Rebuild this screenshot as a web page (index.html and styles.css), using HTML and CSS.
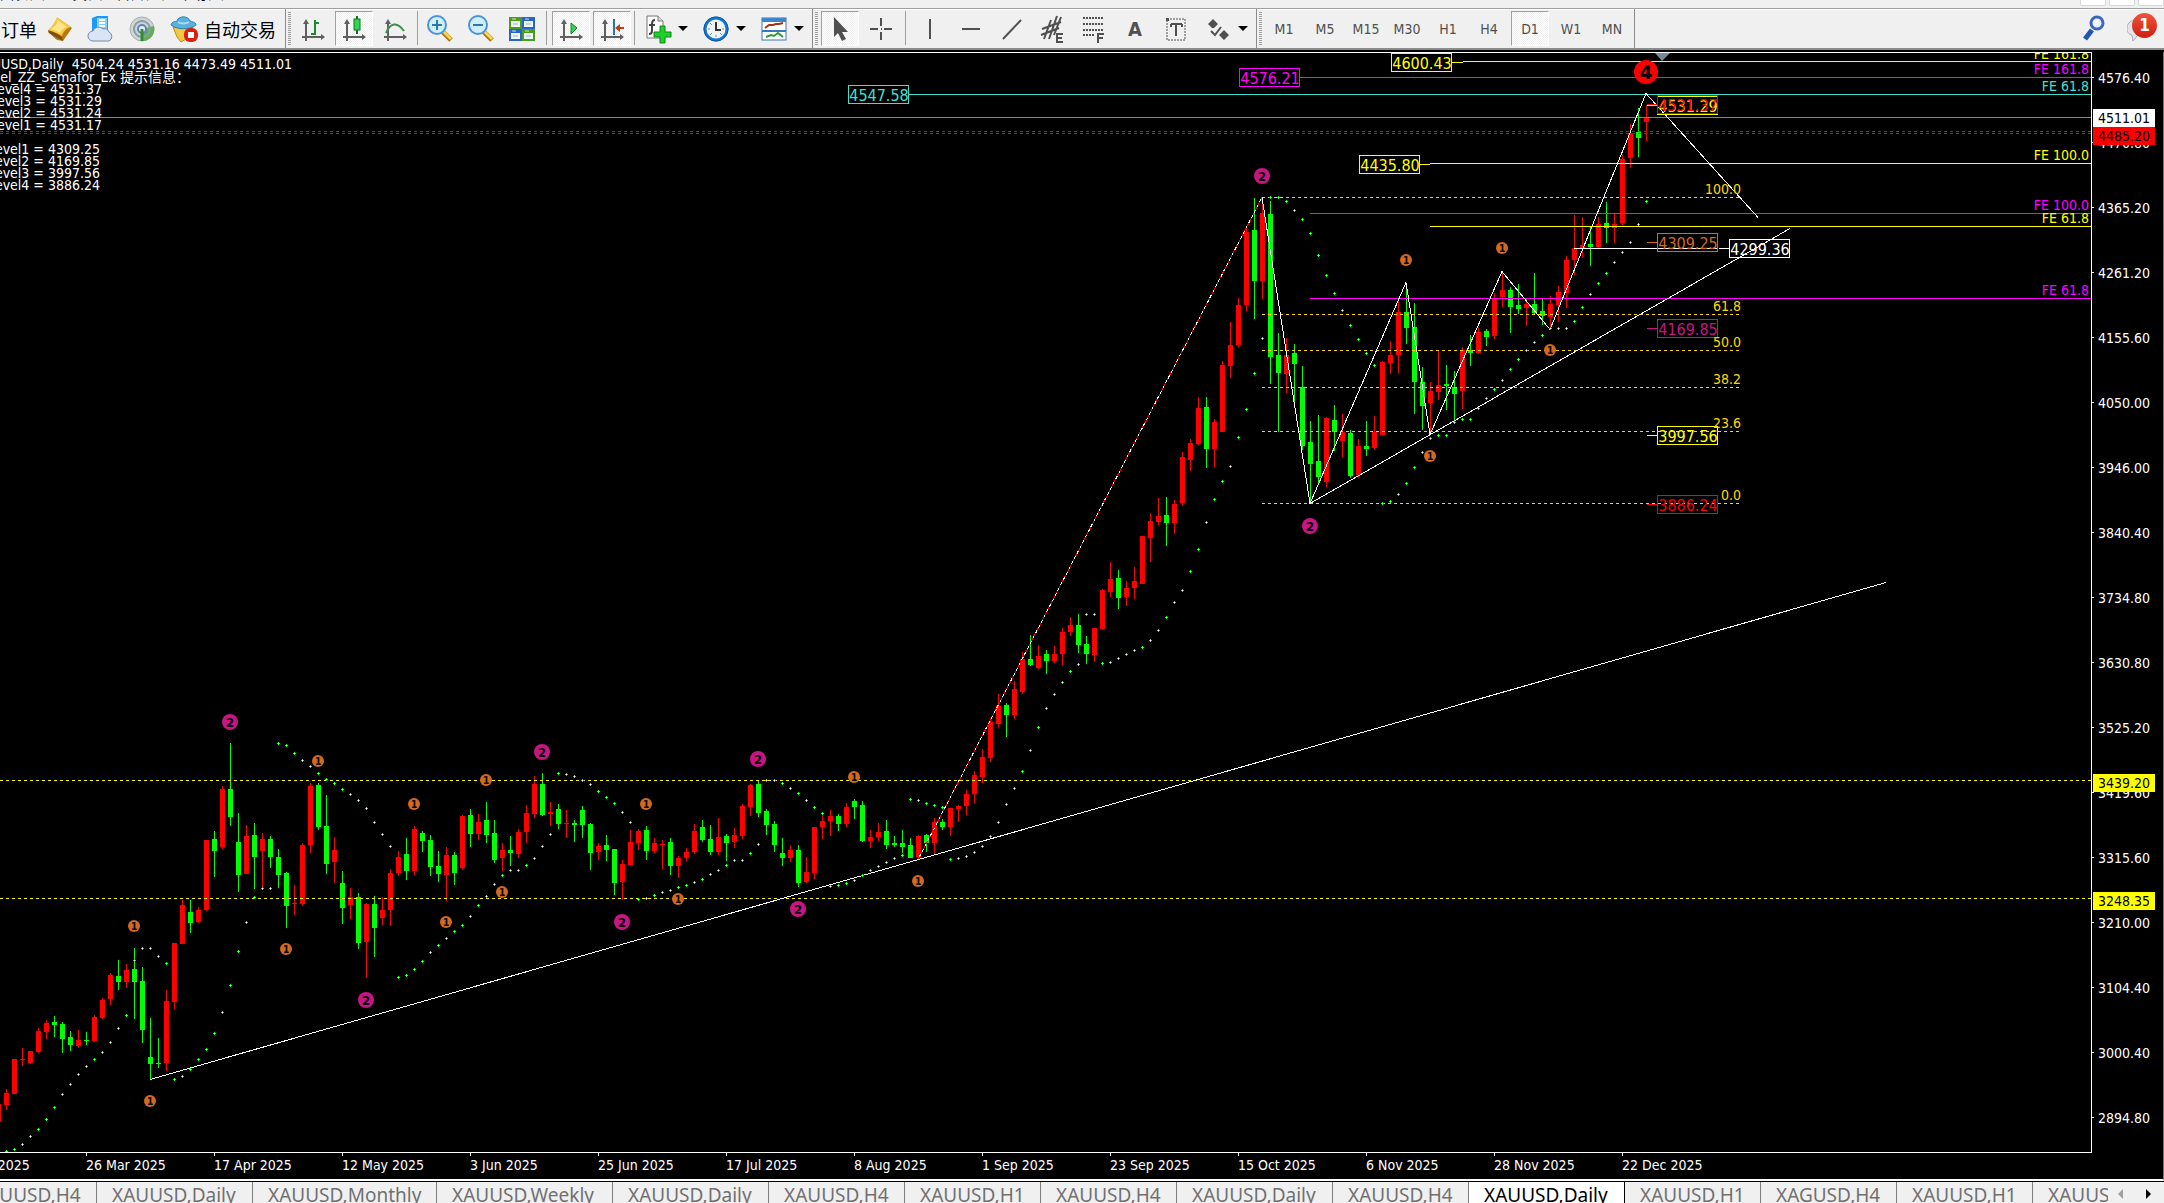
FILE: index.html
```html
<!DOCTYPE html>
<html lang="zh-CN">
<head>
<meta charset="utf-8">
<title>XAUUSD,Daily</title>
<link rel="stylesheet" href="styles.css">
</head>
<body>
<header class="menubar">
  <nav class="menus">
    <button>图表(C)</button><button>工具(T)</button><button>窗口(W)</button><button>帮助(H)</button>
  </nav>
  <div class="window-buttons"><button aria-label="最小化"></button><button aria-label="还原"></button><button aria-label="关闭"></button></div>
</header>

<div class="toolbars">
  <div class="toolbar">
    <button class="tool order">新订单</button>
    <button class="tool" aria-label="市场"><svg width="28" height="28" viewBox="0 0 28 28"><path d="M2 17 12 3l14 10-9 13-6-1z" fill="#b87812"/><path d="M11 2c3 3 8 5 14 10-5 1-8 5-9 9C11 18 6 16 2 15c4-3 7-8 9-13z" fill="#f6c844"/><path d="M12 5c2 3 6 4 9 7-4 1-6 4-7 6-3-2-6-3-9-4 4-2 6-5 7-9z" fill="#fde58a"/><path d="M2 15c4 2 9 3 14 7l1 4L3 18z" fill="#7e4f08"/></svg></button>
    <button class="tool" aria-label="云服务"><svg width="28" height="28" viewBox="0 0 28 28"><path d="M5 3 10 1h11v15l-5 3H5z" fill="#1d9bf0"/><path d="M10 3h10v13H10z" fill="#7fd0ff"/><path d="M12 5h6M12 8h6M12 11h6" stroke="#fff" stroke-width="2"/><path d="M6 26a5 5 0 0 1 0-10 6 6 0 0 1 10-2 5 5 0 0 1 6 3 5 5 0 0 1 0 9z" fill="#dbe4f2" stroke="#7288b2"/></svg></button>
    <button class="tool" aria-label="信号"><svg width="28" height="28" viewBox="0 0 28 28"><circle cx="14" cy="14" r="12" fill="#cdd6d4" stroke="#a3b0b5"/><path d="M14 14 26 11a12 12 0 0 1-12 15z" fill="#5fb054"/><circle cx="14" cy="14" r="8" fill="none" stroke="#8b9ca8" stroke-width="2"/><circle cx="14" cy="14" r="4" fill="#e8edf2" stroke="#5d83b8" stroke-width="2"/><path d="M14 14v12" stroke="#2d8f2d" stroke-width="3"/></svg></button>
    <button class="tool auto"><svg width="28" height="28" viewBox="0 0 28 28"><path d="M3 12h20l-5 11-7 4-4-5z" fill="#f4c83c" stroke="#b98d1c"/><path d="M1 10c1-4 4-3 6-4 1-5 11-6 13 0 2 1 6 1 6 4-6 5-19 5-25 0z" fill="#5bb0dd" stroke="#2f83b4"/><path d="M8 7c3 2 8 2 11 0" stroke="#a8dcf5" stroke-width="2" fill="none"/><rect x="14" y="13" width="14" height="14" rx="6" fill="#d8200f"/><rect x="18" y="17" width="6" height="6" fill="#fff"/></svg><span>自动交易</span></button>
  </div>
  <div class="toolbar">
    <i class="grip"></i>
    <button class="tool" aria-label="柱状图"><svg width="26" height="26" viewBox="0 0 26 26"><g class="axes"><path d="M6 25V5M2 21h20"/><path class="tip" d="M3 8 6 3l3 5zM21 18l4 3-4 3z"/></g><path d="M11 18h4M15 19V4M15 7h4" fill="none" stroke="#1a8a2a" stroke-width="2"/></svg></button>
    <button class="tool on" aria-label="阴阳烛"><svg width="26" height="26" viewBox="0 0 26 26"><g class="axes"><path d="M6 25V5M2 21h20"/><path class="tip" d="M3 8 6 3l3 5zM21 18l4 3-4 3z"/></g><path d="M16 0v18" stroke="#0b7a1c" stroke-width="2"/><rect x="13" y="3" width="6" height="11" fill="#2fd651" stroke="#0b7a1c"/></svg></button>
    <button class="tool" aria-label="折线图"><svg width="26" height="26" viewBox="0 0 26 26"><g class="axes"><path d="M6 25V5M2 21h20"/><path class="tip" d="M3 8 6 3l3 5zM21 18l4 3-4 3z"/></g><path d="M4 17C8 7 15 5 22 15" fill="none" stroke="#3f8f4a" stroke-width="2"/></svg></button>
    <i class="sep"></i>
    <button class="tool" aria-label="放大"><svg width="28" height="28" viewBox="0 0 28 28"><path d="m17 17 8 8" stroke="#a87808" stroke-width="5"/><path d="m17 16 8 8" stroke="#f6d45a" stroke-width="3"/><circle cx="11" cy="10" r="9" fill="#cfeefc" stroke="#4c93d6" stroke-width="2"/><path d="M6 10h10M11 5v10" stroke="#2f78a8" stroke-width="2"/></svg></button>
    <button class="tool" aria-label="缩小"><svg width="28" height="28" viewBox="0 0 28 28"><path d="m17 17 8 8" stroke="#a87808" stroke-width="5"/><path d="m17 16 8 8" stroke="#f6d45a" stroke-width="3"/><circle cx="11" cy="10" r="9" fill="#cfeefc" stroke="#4c93d6" stroke-width="2"/><path d="M6 10h10" stroke="#2f78a8" stroke-width="2"/></svg></button>
    <button class="tool" aria-label="平铺窗口"><svg width="26" height="26" viewBox="0 0 26 26"><path d="M0 1h13v12H0zM13 13h13v12H13z" fill="#4c9c1e"/><path d="M13 1h13v12H13zM0 13h13v12H0z" fill="#2a62d4"/><path d="M2 5h9v6H2zM15 5h9v6h-9zM2 17h9v6H2zM15 17h9v6h-9z" fill="#eef6f4"/><path d="M4 8h5M17 8h5M4 20h5M17 20h5" stroke="#8fb8c8"/><path d="M3 3h4M16 3h4M3 15h4M16 15h4" stroke="#c4e6b8"/></svg></button>
    <i class="sep wide"></i>
    <button class="tool on" aria-label="自动滚动"><svg width="26" height="26" viewBox="0 0 26 26"><g class="axes"><path d="M6 25V5M2 21h20"/><path class="tip" d="M3 8 6 3l3 5zM21 18l4 3-4 3z"/></g><path d="m13 7 6 5-6 6z" fill="#35d055" stroke="#0b8a24"/></svg></button>
    <button class="tool on" aria-label="图表平移"><svg width="26" height="26" viewBox="0 0 26 26"><g class="axes"><path d="M6 25V5M2 21h20"/><path class="tip" d="M3 8 6 3l3 5zM21 18l4 3-4 3z"/></g><path d="M15 3v16" stroke="#2377b8" stroke-width="2"/><path d="m16 12 5-4v3h4v2h-4v3z" fill="#c8380c"/></svg></button>
    <i class="sep"></i>
    <button class="tool menu" aria-label="技术指标"><svg width="30" height="30" viewBox="0 0 30 30"><path d="M4 2h11l5 5v17H4z" fill="#fff" stroke="#777"/><path d="M15 2v5h5" fill="#ddd" stroke="#777"/><path d="M12 6c-3 0-3 2-3 4v7c0 2-1 3-3 3M6 11h6" fill="none" stroke="#444" stroke-width="2"/><path d="M17 12h5v6h6v5h-6v6h-5v-6h-6v-5h6z" fill="#1fcf2c" stroke="#0a8a14"/></svg></button>
    <button class="tool menu" aria-label="时间周期"><svg width="30" height="30" viewBox="0 0 30 30"><circle cx="15" cy="15" r="11" fill="#eef3f6" stroke="#1577cf" stroke-width="3"/><circle cx="15" cy="15" r="12" fill="none" stroke="#0a5aa8"/><path d="M15 8v8h5" fill="none" stroke="#333" stroke-width="2"/><path d="M15 23v-2M7 15h2M23 15h-2M9 9l2 2M9 21l2-2M21 21l-2-2" stroke="#888"/></svg></button>
    <button class="tool menu" aria-label="模板"><svg width="30" height="30" viewBox="0 0 30 30"><rect x="3" y="4" width="24" height="22" fill="#fff" stroke="#3a78b8"/><path d="M3 4h24v4H3z" fill="#3a86d0"/><path d="M3 17h24" stroke="#3a78b8" stroke-width="2"/><path d="m6 14 4-3h4l3-1h3l4-1" fill="none" stroke="#a83014" stroke-width="2"/><path d="m7 23 5-2 3 1 4-3 5 4" fill="none" stroke="#2f9a36" stroke-width="2"/></svg></button>
  </div>
  <div class="toolbar">
    <i class="grip"></i>
    <button class="tool on" aria-label="光标"><svg width="26" height="26" viewBox="0 0 26 26"><path d="M7 1v20l4-4 4 8 4-2-4-7h6z" fill="#505050"/></svg></button>
    <button class="tool" aria-label="十字准线"><svg width="26" height="26" viewBox="0 0 26 26"><path d="M13 2v8M13 16v8M2 13h8M16 13h8M13 13h1" stroke="#505050" stroke-width="2"/></svg></button>
    <i class="sep near"></i>
    <button class="tool" aria-label="垂直线"><svg width="26" height="26" viewBox="0 0 26 26"><path d="M13 3v20" stroke="#505050" stroke-width="2"/></svg></button>
    <button class="tool" aria-label="水平线"><svg width="26" height="26" viewBox="0 0 26 26"><path d="M4 13h18" stroke="#505050" stroke-width="2"/></svg></button>
    <button class="tool" aria-label="趋势线"><svg width="26" height="26" viewBox="0 0 26 26"><path d="M4 23 22 4" stroke="#505050" stroke-width="2"/></svg></button>
    <button class="tool" aria-label="等距通道"><svg width="28" height="28" viewBox="0 0 28 28"><path d="m3 14 19-7M2 20l18-7M5 24 12 5M10 24 18 1M15 20 22 2" stroke="#505050" stroke-width="2"/><path d="M24 19h-6v8h6M18 23h5" fill="none" stroke="#505050" stroke-width="2"/></svg></button>
    <button class="tool" aria-label="斐波那契回撤"><svg width="28" height="28" viewBox="0 0 28 28"><path d="M3 3h21M3 9h21M3 15h21M3 20h12" stroke="#505050" stroke-width="2" stroke-dasharray="2 1"/><path d="M24 19h-6v9M18 23h5" fill="none" stroke="#505050" stroke-width="2"/></svg></button>
    <button class="tool letter" aria-label="文字">A</button>
    <button class="tool" aria-label="文字标签"><svg width="26" height="26" viewBox="0 0 26 26"><path d="M4 3h18v21H4z" fill="none" stroke="#505050" stroke-dasharray="2 1" stroke-width="1"/><path d="M8 8h11M13 8v12M8 8v3M19 8v3" fill="none" stroke="#505050" stroke-width="2"/><path d="M3 2h3v3H3z" fill="#505050"/></svg></button>
    <button class="tool menu" aria-label="箭头"><svg width="26" height="26" viewBox="0 0 26 26"><path d="m8 3 5 5-4 4H7L3 8zM19 14l5 5-5 5-5-5z" fill="#505050"/><path d="m6 15 4 4 6-8" fill="none" stroke="#505050" stroke-width="2"/></svg></button>
  </div>
  <div class="toolbar">
    <i class="grip"></i>
    <button class="tool tf">M1</button><button class="tool tf">M5</button><button class="tool tf">M15</button><button class="tool tf">M30</button><button class="tool tf">H1</button><button class="tool tf">H4</button><button class="tool tf on">D1</button><button class="tool tf">W1</button><button class="tool tf">MN</button>
  </div>
  <div class="status">
    <button class="tool" aria-label="搜索"><svg width="28" height="28" viewBox="0 0 28 28"><path d="m12 16-7 9" stroke="#1f55b8" stroke-width="5"/><circle cx="17" cy="9" r="6" fill="#f2f7fd" stroke="#3a68c0" stroke-width="3"/></svg></button>
    <button class="tool chat" aria-label="消息"><svg width="28" height="28" viewBox="0 0 28 28"><path d="M7 6c-9 2-9 14-2 15l1 6 5-6c6-1 9-5 8-9z" fill="#e3e5ea" stroke="#a7abb3"/></svg><span class="count">1</span></button>
  </div>
</div>

<main class="chart">
  <svg class="plot" role="img" aria-label="XAUUSD 日线图">
    <g transform="translate(0 -53)">
      <g id="candles" shape-rendering="crispEdges"></g>
      <g class="lines" transform="translate(0 0.5)" shape-rendering="crispEdges">
        <path class="grey" d="M0 117h4000"/>
        <path class="red dash" d="M0 131h4000M0 133h4000"/>
        <path class="yellow dash" d="M0 780h4000M0 898h4000"/>
        <path class="teal" d="M909 94h3000"/>
        <path class="magenta" d="M1300 77h3000M1310 213h3000M1310 298h3000"/>
        <path class="yellow" d="M1452 62h11M1463 61h3000M1420 164h10M1430 163h3000M1430 226h3000"/>
        <path class="gold dash" d="M1262 197h478M1262 314h478M1262 350h478M1262 387h478M1262 431h478M1262 503h478"/>
        <path class="white" d="M1574 248h144M1719 248h10"/>
        <path class="white" d="M918 859 1262 197"/>
        <path class="red dash" d="M918 859 1262 197"/>
        <path class="white" d="m1262 197 48 306 96-221 24 152 72-163 48 58 96-236 112 124M1310 503l480-275M150 1079 1886 582"/>
        <path class="orange" d="M1647 242h10"/><path class="violet" d="M1647 328h10"/><path class="yellow" d="M1647 435h10M1647 105h10"/><path class="red" d="M1647 504h10M1647 104h10"/>
      </g>
      <g id="sar" shape-rendering="crispEdges"></g>
      <g id="tags"></g>
      <g id="markers"></g>
      <path d="M1655 53h15l-8 8z" fill="#778899"/>
      <g class="fib">
        <text x="1741" y="194">100.0</text><text x="1741" y="311">61.8</text><text x="1741" y="347">50.0</text><text x="1741" y="384">38.2</text><text x="1741" y="428">23.6</text><text x="1741" y="500">0.0</text>
      </g>
      <g class="info">
        <text x="292" y="69">XAUUSD,Daily&#160; 4504.24 4531.16 4473.49 4511.01</text>
        <text x="190" y="82">Level_ZZ_Semafor_Ex 提示信息：</text>
        <text x="102" y="94">Level4 = 4531.37</text>
        <text x="102" y="106">Level3 = 4531.29</text>
        <text x="102" y="118">Level2 = 4531.24</text>
        <text x="102" y="130">Level1 = 4531.17</text>
        <text x="100" y="154">Level1 = 4309.25</text>
        <text x="100" y="166">Level2 = 4169.85</text>
        <text x="100" y="178">Level3 = 3997.56</text>
        <text x="100" y="190">Level4 = 3886.24</text>
      </g>
    </g>
  </svg>
  <div class="expansions">
    <span class="fe f1">FE 161.8</span><span class="fe f2">FE 161.8</span><span class="fe f3">FE 61.8</span><span class="fe f4">FE 100.0</span><span class="fe f5">FE 100.0</span><span class="fe f6">FE 61.8</span><span class="fe f7">FE 61.8</span>
  </div>
  <div class="prices">
    <ol>
      <li>4576.40</li><li>4470.80</li><li>4365.20</li><li>4261.20</li><li>4155.60</li><li>4050.00</li><li>3946.00</li><li>3840.40</li><li>3734.80</li><li>3630.80</li><li>3525.20</li><li>3419.60</li><li>3315.60</li><li>3210.00</li><li>3104.40</li><li>3000.40</li><li>2894.80</li>
    </ol>
    <span class="quote bid">4511.01</span><span class="quote ask">4485.20</span><span class="quote upper">3439.20</span><span class="quote lower">3248.35</span>
  </div>
  <ol class="dates">
    <li>4 Mar 2025</li><li>26 Mar 2025</li><li>17 Apr 2025</li><li>12 May 2025</li><li>3 Jun 2025</li><li>25 Jun 2025</li><li>17 Jul 2025</li><li>8 Aug 2025</li><li>1 Sep 2025</li><li>23 Sep 2025</li><li>15 Oct 2025</li><li>6 Nov 2025</li><li>28 Nov 2025</li><li>22 Dec 2025</li>
  </ol>
</main>

<footer class="tabbar">
  <nav class="tabs">
    <button class="tab">XAUUSD,H4</button><button class="tab daily">XAUUSD,Daily</button><button class="tab monthly">XAUUSD,Monthly</button><button class="tab weekly">XAUUSD,Weekly</button><button class="tab daily">XAUUSD,Daily</button><button class="tab">XAUUSD,H4</button><button class="tab">XAUUSD,H1</button><button class="tab">XAUUSD,H4</button><button class="tab daily">XAUUSD,Daily</button><button class="tab">XAUUSD,H4</button><button class="tab daily current">XAUUSD,Daily</button><button class="tab">XAUUSD,H1</button><button class="tab">XAGUSD,H4</button><button class="tab">XAUUSD,H1</button><button class="tab">XAUUSD,H4</button>
  </nav>
  <button class="scroll" aria-label="向左" disabled><svg width="28" height="20" viewBox="0 0 28 20"><path d="m15 7-5 5 5 5z" fill="#a0a0a0"/></svg></button>
  <button class="scroll" aria-label="向右"><svg width="28" height="20" viewBox="0 0 28 20"><path d="m10 7 5 5-5 5z" fill="#000"/></svg></button>
</footer>
<script src="chart.js"></script>
</body>
</html>
```
FILE: styles.css
```css
* { box-sizing: border-box; }
body {
  margin: 0;
  height: 100vh;
  display: flex;
  flex-direction: column;
  overflow: hidden;
  background: #f0f0f0;
  font: 14px/18px "DejaVu Sans Condensed", "Noto Sans", "Noto Sans CJK SC", sans-serif;
}
button {
  margin: 0;
  padding: 0;
  border: 0;
  background: none;
  font: inherit;
  color: inherit;
}
ol { margin: 0; padding: 0; list-style: none; }

/* menu strip */
.menubar {
  height: 8px;
  flex: none;
  display: flex;
  justify-content: space-between;
  overflow: hidden;
}
.menus { display: flex; align-items: flex-end; height: 3px; gap: 12px; overflow: hidden; font-size: 14px; }
.menus button { flex: none; line-height: 18px; white-space: nowrap; }
.window-buttons { display: flex; gap: 3px; margin-top: -4px; }
.window-buttons button {
  width: 26px;
  height: 10px;
  background: #fff;
  border: 1px solid #d8d8d8;
  border-radius: 2px;
}

/* toolbars */
.toolbars {
  flex: none;
  height: 44px;
  display: flex;
  border-top: 1px solid #a0a0a0;
  border-bottom: 2px solid #000;
  box-shadow: inset 0 1px #fff, inset 0 -2px #8c8c8c;
  overflow: hidden;
}
.toolbar {
  display: flex;
  align-items: flex-start;
  gap: 3px;
  height: 39px;
  padding: 2px 3px 0 0;
  border-right: 1px solid #8c8c8c;
  flex: none;
}
.tool {
  width: 38px;
  height: 35px;
  flex: none;
  display: flex;
  align-items: center;
  justify-content: center;
  border: 1px solid transparent;
  color: #505050;
}
.tool.on {
  border-color: #a0a0a0 #fff #fff #a0a0a0;
  background: repeating-conic-gradient(#fff 0 25%, #f0f0f0 0 50%) 0 0 / 2px 2px;
}
.order, .auto { color: #000; font: 18px/24px "Noto Sans CJK SC", sans-serif; white-space: nowrap; }
.order { justify-content: flex-end; overflow: hidden; }
.auto { width: 118px; gap: 6px; }
.tf { font-size: 14px; }
.letter { font-size: 20px; font-weight: bold; }
.axes { fill: none; stroke: #606060; stroke-width: 2; }
.axes .tip { fill: #606060; stroke: none; }
.menu { width: 55px; justify-content: flex-start; padding-left: 4px; gap: 5px; }
.menu::after {
  content: "";
  border: 5px solid transparent;
  border-top-color: #000;
  border-bottom: 0;
}
.tool.menu > svg { width: 30px; flex: none; }
.grip {
  width: 3px;
  height: 33px;
  margin: 1px 0 0 2px;
  background: repeating-linear-gradient(#a0a0a0 0 1px, transparent 1px 2px);
}
.sep { width: 1px; height: 34px; background: #a0a0a0; }
.sep.wide { margin: 0 2px; }
.sep.near { margin: 0 2px; }
.status { display: flex; gap: 9px; margin-left: auto; padding: 1px 4px 0 0; }
.chat { position: relative; }
.count {
  position: absolute;
  left: 9px;
  top: 2px;
  width: 25px;
  height: 25px;
  border-radius: 50%;
  background: linear-gradient(#f0553c, #d01c10);
  color: #fff;
  font: bold 17px/25px "DejaVu Sans Condensed", sans-serif;
  text-align: center;
}

/* chart window */
.chart {
  flex: 1;
  min-height: 0;
  position: relative;
  display: grid;
  grid-template-columns: minmax(0, 1fr) 71px;
  grid-template-rows: minmax(0, 1fr) 26px;
  background: #000;
  color: #fff;
  border-right: 1px solid #787878;
  border-bottom: 2px solid #fff;
  overflow: hidden;
}
.plot {
  width: 100%;
  height: 100%;
  border: solid #fff;
  border-width: 1px 1px 1px 0;
  font-size: 14px;
}
.lines path { fill: none; stroke-width: 1px; }
.lines .dash { stroke-dasharray: 3 3; }
.grey { stroke: #778899; }
.red { stroke: #f00; }
.yellow { stroke: #ff0; }
.gold { stroke: #ffd700; }
.teal { stroke: #40e0d0; }
.magenta { stroke: #f0f; }
.white { stroke: #fff; }
.orange { stroke: #d2691e; }
.violet { stroke: #c71585; }
.fib text { fill: #ffd700; text-anchor: end; }
.info text { fill: #fff; text-anchor: end; }
.tag rect { fill: none; }
.tag text { stroke: none; font-size: 16px; text-anchor: middle; }
.marker text { font-weight: bold; text-anchor: middle; fill: #000; }

.expansions {
  position: absolute;
  top: 1px;
  right: 74px;
  width: 80px;
  height: 300px;
  overflow: hidden;
  text-align: right;
}
.fe { position: absolute; right: 0; line-height: 18px; }
.f1 { top: -8px; color: #ff0; }
.f2 { top: 7px; color: #f0f; }
.f3 { top: 24px; color: #40e0d0; }
.f4 { top: 93px; color: #ff0; }
.f5 { top: 143px; color: #f0f; }
.f6 { top: 156px; color: #ff0; }
.f7 { top: 228px; color: #f0f; }

.prices { position: relative; overflow: hidden; }
.prices li {
  display: flex;
  align-items: center;
  gap: 4px;
  height: 65px;
}
.prices ol { margin-top: -7px; }
.prices li::before { content: ""; width: 2px; height: 1px; background: #fff; }
.quote {
  position: absolute;
  left: 1px;
  width: 62px;
  height: 18px;
  padding-left: 5px;
  line-height: 18px;
  color: #000;
}
.bid { top: 57px; background: #fff; }
.ask { top: 75px; background: #f00; }
.upper { top: 722px; background: #ff0; }
.lower { top: 840px; background: #ff0; }

.dates {
  grid-column: 1 / -1;
  display: flex;
  margin-left: -42px;
}
.dates li {
  width: 128px;
  flex: none;
  padding-top: 3px;
  white-space: nowrap;
  background: linear-gradient(#fff, #fff) 0 0 / 1px 3px no-repeat;
}

/* chart tabs */
.tabbar {
  flex: none;
  height: 22px;
  display: flex;
  border-top: 1px solid #000;
  overflow: hidden;
}
.tabs { flex: 1; min-width: 0; display: flex; margin-left: -39px; overflow: hidden; }
.tab {
  width: 136px;
  height: 21px;
  flex: none;
  display: flex;
  align-items: flex-start;
  padding-left: 15px;
  border-right: 1px solid #808080;
  color: #707070;
  font: 19px/26px "Noto Sans", sans-serif;
  white-space: nowrap;
  overflow: hidden;
}
.daily { width: 156px; }
.weekly { width: 176px; }
.monthly { width: 184px; }
.current { background: #fff; color: #000; border-right-color: #000; }
.scroll { width: 28px; flex: none; }
```
FILE: chart.js
```js
// One row per bar: colour, high, body top, body bottom, low, SAR.
// Values count thirds of a pixel down from the block's base line.
const blocks = [
  { base: 680, first: -1, bars: `
r 1271 1271 1325 1325 1440
r 1226 1238 1274 1291 1413
r 1136 1136 1241 1241 1407
r 1105 1136 1139 1158 1392
r 1112 1112 1148 1151 1368
r 1043 1052 1115 1118 1347
r 1019 1028 1055 1076 1317
g 1007 1025 1034 1070 1281
g 1025 1031 1076 1118 1242
g 1052 1070 1094 1112 1212
r 1049 1079 1097 1103 1182
g 1055 1079 1082 1094 1158
r 1004 1010 1082 1085 1137
r 953 959 1013 1016 1116
r 878 884 956 974 1086
g 839 887 905 929 1044
r 851 869 905 923 1005
g 803 866 905 1016 840
g 860 902 1049 1088 804
g 1013 1130 1151 1196 804
g 1073 1148 1151 1163 828
r 929 962 1148 1172 849
r 788 788 965 986 1197
r 659 675 791 791 1188
g 659 696 729 759 1167
r 681 690 726 729 1137
r 480 480 690 693 1107
g 453 477 513 591 1059
r 318 327 501 507 996
g 189 327 411 438 915
g 399 486 585 636 813
r 435 468 582 582 727
g 429 465 531 627 652
r 459 477 513 624 625
g 468 477 531 564 625
g 507 531 585 624 190
g 576 579 678 744 196
r 615 669 672 705 220
r 489 495 672 678 241
r 309 318 495 519 259
g 309 315 441 450 280
g 345 438 552 582 298
r 471 510 546 609 310
g 573 609 684 732 328
r 624 651 675 717 343
g 639 651 788 806 361
r 669 672 785 893 385
g 648 672 744 830 427
r 651 690 714 735 463
r 567 579 690 738 499
r 513 531 579 588 891
g 474 522 573 600 885
r 438 447 573 585 867
g 453 459 483 516 843
g 465 480 561 588 816
g 513 558 582 606 795
r 501 525 585 663 775
g 516 525 579 615 754
r 405 408 564 570 736
g 387 405 462 501 709
r 402 426 462 480 676
g 366 420 465 489 649
g 420 459 540 549 613
r 489 510 534 573 586
g 468 510 519 558 571
r 447 456 522 534 571
r 375 399 456 489 556
r 288 312 402 414 535
g 279 312 405 408 499
r 366 396 402 438 463
g 372 387 432 447 280
r 390 429 431 474 283
g 420 429 435 486 289
g 378 390 435 474 301
g 429 432 519 570 313
r 489 498 516 540 334
g 465 495 510 543 352
g 507 507 609 645 370
r 540 552 606 660 397
r 450 486 555 558 427
r 447 453 489 510 658
g 438 450 513 540 655
r 474 489 513 519 646
r 480 491 494 567 637
g 474 486 558 585 631
r 528 534 558 594 622
r 504 516 534 543 616
r 432 453 516 522 607
g 420 441 480 486 598
g 435 477 516 525 583
r 414 471 516 525 571
g 462 468 489 543 556
r 444 465 486 504 541
r 372 378 468 477 541
r 312 315 381 408 520
g 303 312 399 411 493
g 387 393 435 465 301
g 423 432 495 516 301
g 474 519 534 558 310
r 495 510 534 546 325
g 495 510 609 621 340
r 531 576 606 609 361
r 441 441 579 597 382
r 405 423 441 477 400
r 390 408 423 468 619
g 402 408 432 453 616
r 369 381 432 441 610
g 357 363 381 417 601
g 363 375 483 486 586
r 450 471 483 504 571
r 429 456 471 483 559
g 420 453 495 507 547
g 468 489 495 501 535
g 450 489 501 519 526
g 475 495 534 534 358
r 465 468 531 534 361
g 462 465 489 516 370
r 414 426 489 522 376
g 417 426 441 450 382
r 384 384 441 468 538` },
  { base: 340, first: 119, bars: `
r 1395 1398 1407 1446 1555
r 1350 1362 1398 1425 1549
r 1293 1305 1362 1389 1537
r 1227 1251 1311 1329 1519
r 1134 1146 1254 1266 1489
r 1062 1098 1152 1161 1447
g 1089 1095 1125 1191 1393
r 1023 1047 1125 1137 1345
r 936 957 1056 1062 1294
g 885 957 975 978 1231
r 915 948 984 987 1162
g 930 942 963 1002 1105
r 918 942 963 969 1063
r 864 876 942 975 1027
r 831 855 876 888 994
g 822 855 915 939 973
g 888 912 942 972 823
r 864 864 945 966 823
r 747 750 867 870 970
r 666 717 756 771 967
g 690 714 774 807 955
r 723 744 771 798 943
r 681 723 744 777 931
r 588 588 732 732 922
r 519 543 594 666 901
r 474 528 546 555 871
g 471 525 549 618 832
r 480 492 549 582 787
r 336 351 489 498 751
r 297 309 360 393 694
r 171 204 312 315 628
g 171 201 327 384 547
r 237 246 327 381 478
r 63 75 276 276 424` },
  { base: 120, first: 153, bars: `
r 606 675 738 774 1039
r 534 555 675 681 952
r 321 336 555 573 868
g 234 330 483 597 760
r 231 279 483 537 655
g 243 282 711 792 232
g 639 705 759 936 232
r 654 705 762 819 244
g 672 699 732 861 271
g 738 801 978 990 298
g 903 966 1032 1150 340
g 885 1023 1071 1095 406
r 891 894 1086 1101 466
g 855 900 936 993 520
r 882 936 963 1011 571
g 930 939 1068 1074 616
r 957 978 1065 1074 658
g 903 978 987 1008 700
r 888 936 984 990 736
r 723 726 945 948 1150
r 663 705 729 762 1144
r 543 576 705 759 1123
g 489 576 624 672 1090
g 549 621 786 882 1042
g 741 786 858 930 997
r 786 813 849 942 955
r 693 795 816 840 946
g 735 792 798 870 946
g 753 801 822 903 907
r 681 690 813 867 898
g 645 690 699 738 898
r 624 636 699 702 865
g 627 633 651 678 835
r 519 534 648 657 808
r 453 510 531 561 781
g 501 510 561 639 748
g 492 555 567 582 718
r 537 552 564 618 691
g 459 552 579 582 667
g 537 573 588 615 646
r 528 552 591 624 625
r 498 516 555 606 625
r 408 420 519 564 625
r 285 384 420 465 604
r 291 375 384 414 562
g 318 372 381 438 523
r 291 312 381 384 490
g 246 309 324 369 460
r 279 312 324 369 427
r 105 117 309 315 397` },
  { base: 80, first: 203, bars: `
r 132 159 234 264 487
g 84 156 174 231 433
r 75 111 126 183 364` }
];

const NS = 'http://www.w3.org/2000/svg';
function add(parent, name, attrs, text) {
  const node = document.createElementNS(NS, name);
  for (const key in attrs) node.setAttribute(key, attrs[key]);
  if (text) node.textContent = text;
  parent.appendChild(node);
  return node;
}

const candles = document.getElementById('candles');
const sar = document.getElementById('sar');
for (const block of blocks) {
  block.bars.trim().split('\n').forEach((line, i) => {
    const [colour, ...values] = line.split(' ');
    const [high, top, bottom, low, dot] = values.map(v => block.base + Math.round(v / 3));
    const x = 6 + 8 * (block.first + i);
    const fill = colour === 'r' ? '#f00' : '#0f0';
    add(candles, 'rect', { x, y: high, width: 1, height: low - high, fill });
    add(candles, 'rect', { x: x - 2, y: top, width: 5, height: Math.max(1, bottom - top), fill });
    add(sar, 'path', { d: `M${x - 1} ${dot}h3v1h-3zM${x} ${dot - 1}h1v3h-1z`, fill: '#0f0' });
    add(sar, 'rect', { x, y: dot, width: 1, height: 1, fill: '#dfd' });
  });
}

// Price tags: left, top, text, colour
const tags = document.getElementById('tags');
[
  [848, 85, '4547.58', '#40e0d0'], [1239, 68, '4576.21', '#f0f'],
  [1391, 53, '4600.43', '#ff0'], [1359, 155, '4435.80', '#ff0'],
  [1657, 96, '4531.29', '#ff0'], [1657, 95, '4531.37', '#f00'],
  [1657, 233, '4309.25', '#d2691e'], [1729, 239, '4299.36', '#fff'],
  [1657, 319, '4169.85', '#c71585'], [1657, 426, '3997.56', '#ff0'],
  [1657, 495, '3886.24', '#f00']
].forEach(([x, y, text, colour]) => {
  const tag = add(tags, 'g', { class: 'tag', transform: `translate(${x} ${y})`, fill: colour, stroke: colour });
  add(tag, 'rect', { x: 0.5, y: 0.5, width: 60, height: 18 });
  add(tag, 'text', { x: 31, y: 16 }, text);
});

// Semafor marks: x, y, level
const looks = { 1: ['#d2691e', 6, 10], 2: ['#c71585', 8, 13], 4: ['#f00', 12, 20] };
const markers = document.getElementById('markers');
[
  [230, 722, 2], [366, 1000, 2], [542, 752, 2], [622, 922, 2], [758, 759, 2], [798, 909, 2],
  [1262, 176, 2], [1310, 526, 2],
  [134, 926, 1], [150, 1101, 1], [286, 949, 1], [318, 761, 1], [414, 804, 1], [446, 922, 1],
  [486, 780, 1], [502, 892, 1], [646, 804, 1], [678, 899, 1], [854, 777, 1], [918, 881, 1],
  [1406, 260, 1], [1430, 456, 1], [1502, 248, 1], [1550, 350, 1],
  [1646, 72, 4]
].forEach(([x, y, level]) => {
  const [fill, r, size] = looks[level];
  const mark = add(markers, 'g', { class: 'marker', transform: `translate(${x} ${y})` });
  add(mark, 'circle', { r, fill });
  add(mark, 'text', { y: Math.round(size * 0.36), 'font-size': size }, String(level));
});
```
